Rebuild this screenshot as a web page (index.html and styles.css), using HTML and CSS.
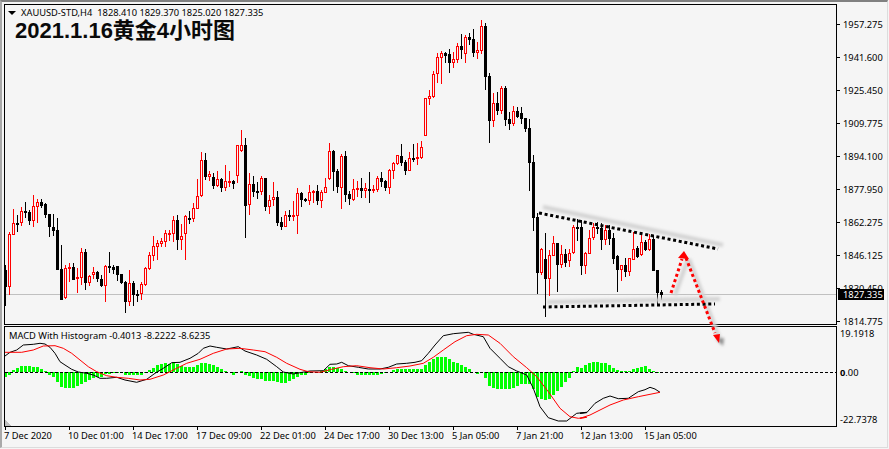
FILE: index.html
```html
<!DOCTYPE html>
<html lang="en">
<head>
    <meta charset="UTF-8">
    <title>XAUUSD-STD,H4</title>
    <link rel="stylesheet" href="styles.css">
</head>
<body>
<div class="window">
    <div class="row price-row">
        <div class="pane price-pane">
            <svg class="chart" id="price-chart" viewBox="5 5 831 319"></svg>
            <div class="legend">
                <i class="legend-arrow"></i>
                <span>XAUUSD-STD,H4</span>
                <span>1828.410 1829.370 1825.020 1827.335</span>
            </div>
            <div class="title">2021.1.16黄金4小时图</div>
        </div>
        <div class="price-axis">
            <span class="tick">1957.275</span>
            <span class="tick">1941.600</span>
            <span class="tick">1925.450</span>
            <span class="tick">1909.775</span>
            <span class="tick">1894.100</span>
            <span class="tick">1877.950</span>
            <span class="tick">1862.275</span>
            <span class="tick">1846.125</span>
            <span class="tick">1830.450</span>
            <span class="tick">1814.775</span>
            <span class="price-now">1827.335</span>
        </div>
    </div>
    <div class="row macd-row">
        <div class="pane macd-pane">
            <svg class="chart" id="macd-chart" viewBox="5 327 831 99"></svg>
            <div class="macd-legend">MACD With Histogram -0.4013 -8.2222 -8.6235</div>
        </div>
        <div class="macd-axis">
            <span class="macd-tick">19.1918</span>
            <span class="macd-tick zero"><b>0</b>.00</span>
            <span class="macd-tick low">-22.7378</span>
        </div>
    </div>
    <div class="time-axis">
        <span>7 Dec 2020</span>
        <span>10 Dec 01:00</span>
        <span>14 Dec 17:00</span>
        <span>17 Dec 09:00</span>
        <span>22 Dec 01:00</span>
        <span>24 Dec 17:00</span>
        <span>30 Dec 13:00</span>
        <span>5 Jan 05:00</span>
        <span>7 Jan 21:00</span>
        <span>12 Jan 13:00</span>
        <span>15 Jan 05:00</span>
    </div>

    <!-- hand drawn trend lines and arrows, they cross both panes -->
    <svg class="drawings" viewBox="0 0 889 449">
        <defs>
            <filter id="soft" x="-20%" y="-200%" width="140%" height="500%">
                <feGaussianBlur stdDeviation="1.5"/>
            </filter>
        </defs>
        <g filter="url(#soft)">
            <path class="shadow" d="M543 207L723 245"/>
            <path class="shadow" d="M547 302L720 299"/>
            <path class="shadow" d="M675 295L688 259"/>
            <path class="shadow" d="M689 259L720 340"/>
            <polygon class="shadow-fill" points="716,339 724,338 723,346"/>
        </g>
        <path class="dots" d="M539 213L718 249"/>
        <path class="dots" d="M543 307L715 304"/>
        <path class="dots red" d="M671 293L682 259"/>
        <path class="dots red" d="M686 258L715 333"/>
        <polygon class="arrow-head" points="684,251 678,258 689,259"/>
        <polygon class="arrow-head" points="713,335 720,334 719,343"/>
    </svg>
</div>
<script src="chart.js"></script>
</body>
</html>
```

FILE: styles.css
```css
* {
    box-sizing: border-box;
}

body {
    margin: 0;
    background: #f5f5f5;
    font-family: "Noto Sans", "Liberation Sans", sans-serif;
    font-size: 9.3px;
    color: #000;
}

.window {
    position: relative;
    width: 888px;
    height: 448px;
    padding: 2px 0 0 2px;
    border-top: 2px solid #808080;
    border-left: 2px solid #a9a9a9;
    border-right: 1px solid #dcdcdc;
    border-bottom: 1px solid #dcdcdc;
    background: #f5f5f5;
}

.row {
    display: flex;
}

.price-row {
    height: 321px;
}

.pane {
    position: relative;
    width: 833px;
    border: 1px solid #000;
}

.price-pane {
    height: 321px;
}

.macd-row {
    margin-top: 1px;
}

.macd-pane {
    height: 101px;
}

.chart {
    position: absolute;
    top: 0;
    left: 0;
    width: 831px;
    height: 100%;
    shape-rendering: crispEdges;
}

.legend {
    position: relative;
    display: flex;
    align-items: center;
    gap: 5px;
    height: 12px;
    margin-top: 2px;
    padding-left: 3px;
    line-height: 12px;
}

.legend-arrow {
    width: 0;
    height: 0;
    border-top: 4px solid #000;
    border-left: 4px solid transparent;
    border-right: 4px solid transparent;
}

.title {
    position: relative;
    margin: 1px 0 0 10px;
    font-family: "Liberation Sans", "Noto Sans CJK SC", sans-serif;
    font-size: 22px;
    font-weight: bold;
    line-height: 22px;
    color: #0a0a0a;
}

.macd-legend {
    position: relative;
    padding: 3px 0 0 4px;
    line-height: 12px;
}

.price-axis {
    position: relative;
    display: flex;
    flex-direction: column;
    padding-top: 4px;
}

.tick {
    display: flex;
    align-items: center;
    height: 33px;
    flex-shrink: 0;
    white-space: nowrap;
}

.tick::before {
    content: "";
    width: 3px;
    height: 1px;
    margin-right: 3px;
    background: #000;
}

.price-now {
    position: absolute;
    top: 285px;
    left: 1px;
    width: 46px;
    height: 11px;
    padding-left: 5px;
    line-height: 11px;
    background: #000;
    color: #fff;
}

.macd-axis {
    display: flex;
    flex-direction: column;
    padding: 2px 0 0 3px;
}

.macd-tick {
    height: 12px;
    line-height: 12px;
    white-space: nowrap;
}

.zero {
    margin-top: 27px;
}

.low {
    margin-top: 35px;
}

.time-axis {
    display: flex;
}

.time-axis span {
    width: 64px;
    height: 15px;
    line-height: 12px;
    white-space: nowrap;
}

.time-axis span::before {
    content: "";
    display: block;
    width: 1px;
    height: 3px;
    margin-left: 1px;
    background: #000;
}

.drawings {
    position: absolute;
    top: -2px;
    left: -2px;
    width: 889px;
    height: 449px;
    pointer-events: none;
}

.shadow {
    fill: none;
    stroke: #d2d2d2;
    stroke-width: 4;
}

.shadow-fill {
    fill: #8a8a8a;
}

.dots {
    fill: none;
    stroke: #000;
    stroke-width: 3;
    stroke-dasharray: 3 2.7;
}

.dots.red {
    stroke: #f00;
}

.arrow-head {
    fill: #f00;
}
```

FILE: chart.js
```js
// [colour, wick top, wick bottom, body top, body bottom], one candle every 4px
const candles = [
    ['b',265,306,270,287],['r',232,295,234,287],['r',209,235,223,235],['b',215,232,223,224],['r',207,226,211,223],
    ['b',202,218,211,213],['b',210,225,212,221],['r',195,227,206,221],['r',199,223,202,207],['b',199,208,202,206],
    ['b',203,218,204,215],['b',214,237,214,227],['b',214,236,227,231],['b',218,270,230,270],['b',245,300,269,300],
    ['r',265,299,268,298],['r',263,282,267,269],['b',263,280,267,280],['r',268,293,277,279],['r',248,285,252,278],
    ['b',249,290,252,283],['r',275,286,276,283],['r',267,279,272,275],['b',271,282,272,279],['b',275,287,279,286],
    ['r',265,302,266,286],['b',252,273,266,268],['b',265,274,267,270],['b',266,281,266,275],['b',274,284,274,283],
    ['b',281,313,282,302],['r',270,306,283,302],['b',281,306,283,295],['b',290,302,294,296],['r',282,300,284,294],
    ['r',267,286,268,285],['r',252,270,255,269],['r',236,261,246,256],['r',240,260,243,247],['r',238,247,241,244],
    ['r',230,247,233,242],['r',230,241,233,234],['r',216,242,220,234],['b',215,250,220,240],['r',224,250,236,240],
    ['r',215,260,216,234],['b',211,224,218,219],['r',203,222,208,219],['r',179,209,196,209],['r',152,197,160,196],
    ['b',153,180,160,177],['r',171,181,174,177],['b',173,189,177,186],['r',171,187,179,186],['b',178,192,179,188],
    ['r',165,191,181,188],['r',171,187,181,182],['b',180,189,181,184],['r',145,183,145,176],['r',130,152,145,151],
    ['b',138,238,145,206],['r',173,215,184,205],['b',176,197,184,192],['b',182,199,191,193],['r',176,195,178,192],
    ['b',178,211,178,207],['r',195,214,200,207],['r',182,206,197,200],['b',191,226,197,223],['b',217,230,222,227],
    ['r',211,227,215,227],['b',210,221,215,216],['r',201,221,215,216],['r',188,234,193,216],['b',192,207,193,200],
    ['b',198,202,199,201],['r',185,205,192,201],['r',190,203,191,193],['b',185,205,191,201],['r',190,208,192,201],
    ['r',178,193,187,193],['r',143,180,151,179],['b',150,191,151,172],['b',169,193,171,187],['r',154,209,156,188],
    ['b',151,202,156,195],['b',191,205,194,199],['r',179,201,189,200],['r',181,197,188,190],['b',178,198,188,191],
    ['r',183,198,188,191],['b',172,203,189,191],['r',185,193,189,191],['r',176,192,178,190],['b',172,187,178,182],
    ['b',180,191,181,188],['r',169,194,170,188],['r',162,179,163,171],['r',155,165,155,164],['b',144,166,156,163],
    ['b',160,175,162,171],['r',152,171,158,171],['b',144,162,158,159],['r',143,165,157,159],['r',141,159,147,158],
    ['r',98,136,98,136],['r',90,105,96,99],['r',71,98,74,97],['r',53,83,57,74],['r',51,84,53,58],
    ['b',52,63,53,56],['b',49,73,54,63],['r',52,68,59,63],['r',43,63,46,60],['b',34,59,46,50],
    ['r',35,63,37,54],['b',33,45,37,40],['b',29,57,39,53],['r',42,59,50,53],['r',20,54,26,51],
    ['b',23,90,26,77],['b',73,143,76,121],['r',93,127,103,121],['b',92,115,103,111],['r',86,114,88,111],
    ['b',86,126,88,120],['b',112,130,119,124],['r',106,126,111,124],['b',107,118,111,117],['b',107,124,113,119],
    ['b',118,132,118,129],['b',119,191,128,163],['b',155,231,162,218],['b',213,294,217,273],['r',248,275,249,273],
    ['b',233,317,259,279],['r',250,296,255,279],['r',236,256,243,256],['b',243,292,243,265],['r',245,268,254,265],
    ['b',249,267,254,263],['r',249,267,253,261],['r',225,254,227,253],['b',219,241,227,228],['b',220,275,227,266],
    ['r',252,274,253,266],['r',230,254,238,254],['r',223,240,227,238],['b',222,234,227,229],['b',223,250,228,240],
    ['r',225,245,230,240],['b',225,245,230,239],['b',233,264,238,259],['b',255,292,256,270],['r',265,281,265,270],
    ['b',258,277,265,272],['r',258,276,258,272],['r',232,260,249,260],['b',246,258,248,257],['r',233,256,242,255],
    ['b',240,251,242,250],['r',234,251,239,250],['b',235,271,239,271],['b',270,305,270,293],['b',290,300,292,295]
];

// histogram heights in 1/3 px, plus is above the zero line
const histogram = [
    -15,-8,5,12,17,18,18,16,16,10,3,-8,-15,-30,-44,-47,-47,-47,-42,-35,-30,-25,-18,-15,-15,
    -6,-5,-3,-3,-3,-10,-10,-8,-8,-8,-3,5,12,20,24,27,25,30,25,17,15,15,16,20,27,27,24,20,15,8,
    3,0,-8,0,2,-10,-13,-18,-20,-21,-27,-28,-28,-30,-32,-32,-28,-22,-15,-10,-8,-3,0,0,3,8,15,15,12,10,
    3,0,-3,-8,-10,-10,-10,-10,-8,-5,-3,0,5,8,10,10,8,8,8,8,20,30,38,44,46,46,38,30,27,20,14,9,0,-7,-2,
    -18,-42,-47,-52,-50,-52,-52,-48,-43,-35,-35,-35,-50,-75,-82,-85,-82,-68,-58,-46,-30,-17,3,14,13,
    22,28,30,29,28,28,20,12,5,3,3,3,8,11,14,18,10,2,-2
];

// traced from the 3x crops: [x offset, x0, y0, x1, y1, ...], y from 320
const macdLine = [
    [0, 15,108,30,97,50,90,70,75,100,73,120,70,135,72,150,82,165,100,180,125,195,135,215,148,235,156,260,160,280,165,300,175,320,175,350,172,375,180,410,187,440,178,465,160,490,145,515,128,540,127,570,115,595,100,610,85,630,78,650,82,680,87,715,80,735,93,770,105,800,118,830,140,850,156,880,162],
    [300, 0,158,30,153,70,152,90,133,110,132,125,127,145,137,175,142,205,147,240,147,265,142,290,132,320,130,345,127,365,122,385,100,405,75,430,47,460,41,505,37,520,43,550,50,570,85,600,115,625,140,650,153,680,165,700,205,720,260,745,293,775,303,800,303,830,280,860,277],
    [580, 0,280,20,278,45,250,70,235,90,228,115,236,145,235,175,215,195,209,210,202,225,207,240,217]
];
const signalLine = [
    [0, 15,97,65,97,100,90,130,78,165,77,190,85,215,100,240,120,265,140,290,155,320,167,350,172,385,175,420,180,450,178,490,165,530,145,560,130,600,118,640,100,680,87,720,85,760,90,795,95,830,112,860,130],
    [300, 0,148,25,155,60,157,95,148,130,140,170,137,210,143,250,147,290,143,330,138,370,130,400,112,430,90,465,65,500,47,530,43,565,45,600,70,640,110,680,143,710,170,745,215,780,265,810,290,835,295,860,292],
    [580, 0,295,30,285,90,255,130,240,175,230,240,217]
];

const ZERO_Y = 372;

function rect(x, y, w, h, fill) {
    return '<rect x="' + x + '" y="' + y + '" width="' + w + '" height="' + h + '" fill="' + fill + '"/>';
}

function candleSvg(c, i) {
    const x = 5 + i * 4;
    const h = c[4] - c[3];
    let out = rect(x, c[1], 1, c[2] - c[1], c[0] === 'r' ? '#f00' : '#000');
    if (c[0] === 'b') {
        out += rect(x - 1, c[3], 3, Math.max(h, 2), '#000');
    } else if (h < 3) {
        out += rect(x - 1, c[3], 3, Math.max(h, 2), '#f00');
    } else {
        out += rect(x - 1, c[3], 3, h, '#f00') + rect(x, c[3] + 1, 1, h - 2, '#f5f5f5');
    }
    return out;
}

function tracePoints(segments) {
    const points = [];
    segments.forEach(function (seg) {
        for (let i = 1; i < seg.length; i += 2) {
            points.push((seg[0] + seg[i] / 3).toFixed(1) + ',' + (320 + seg[i + 1] / 3).toFixed(1));
        }
    });
    return points.join(' ');
}

document.getElementById('price-chart').innerHTML =
    rect(5, 294, 831, 1, '#c0c0c0') + candles.map(candleSvg).join('');

let macd = '<polygon points="5,420 5,426 11,426" fill="#c0c0c0"/>';
histogram.forEach(function (v, i) {
    const h = Math.round(Math.abs(v) / 3);
    macd += rect(4 + i * 4, v > 0 ? ZERO_Y - h : ZERO_Y, 3, h, '#0f0');
});
macd += '<path d="M5 372.5H836" fill="none" stroke="#000" stroke-dasharray="3 2"/>';
macd += '<polyline points="' + tracePoints(macdLine) + '" fill="none" stroke="#000" shape-rendering="auto"/>';
macd += '<polyline points="' + tracePoints(signalLine) + '" fill="none" stroke="#f00" shape-rendering="auto"/>';
document.getElementById('macd-chart').innerHTML = macd;
```
